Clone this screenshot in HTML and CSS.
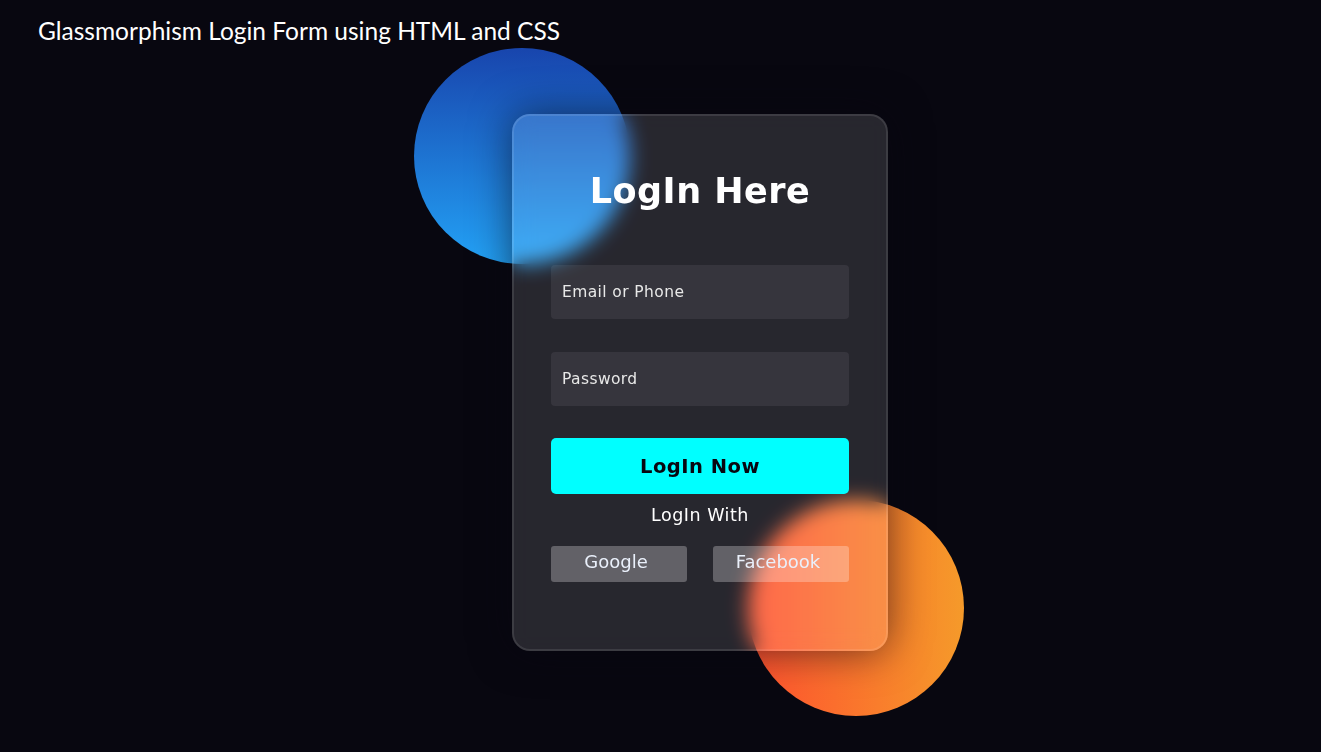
FILE: index.html
```html
<!DOCTYPE html>
<html lang="en">
<head>
<meta charset="utf-8">
<title>Glassmorphism Login Form</title>
<link rel="stylesheet" href="styles.css">
</head>
<body>
<div class="page">
  <p class="caption">Glassmorphism Login Form using HTML and CSS</p>
  <div class="stage">
    <div class="shape shape-blue"></div>
    <div class="shape shape-orange"></div>
    <form class="card">
      <h3 class="card-title">LogIn Here</h3>
      <input class="field field-first" type="text" placeholder="Email or Phone">
      <input class="field field-next" type="password" placeholder="Password">
      <button class="submit" type="button">LogIn Now</button>
      <p class="with">LogIn With</p>
      <div class="social">
        <div class="social-btn">Google</div>
        <div class="social-btn">Facebook</div>
      </div>
    </form>
  </div>
</div>
</body>
</html>
```

FILE: styles.css
```css
* { box-sizing: border-box; }
html, body { margin: 0; padding: 0; }
body {
  background: #080710;
  width: 1321px;
  height: 752px;
  overflow: hidden;
}
.page {
  display: flex;
  flex-direction: column;
}
.caption {
  margin: 0;
  padding: 16px 0 0 38px;
  height: 46px;
  line-height: 30px;
  font-family: "Lato", "Open Sans", sans-serif;
  font-size: 24.5px;
  color: #ffffff;
}
.stage {
  position: relative;
  width: 376px;
  height: 537px;
  margin: 68px 0 0 512px;
}
.shape {
  position: absolute;
  width: 216px;
  height: 216px;
  border-radius: 50%;
}
.shape-blue {
  left: -98px;
  top: -66px;
  background: linear-gradient(#1845ad, #23a2f6);
}
.shape-orange {
  left: 236px;
  top: 386px;
  background: linear-gradient(to right, #ff512f, #f59a2a);
}
.card {
  position: relative;
  display: flex;
  flex-direction: column;
  width: 376px;
  height: 537px;
  margin: 0;
  padding: 50px 37px 0;
  background-color: rgba(255, 255, 255, 0.13);
  border: 2px solid rgba(255, 255, 255, 0.1);
  border-radius: 18px;
  backdrop-filter: blur(10px);
  -webkit-backdrop-filter: blur(10px);
  box-shadow: 0 0 40px rgba(8, 7, 16, 0.6);
  font-family: "DejaVu Sans", Verdana, sans-serif;
  color: #ffffff;
}
.card-title {
  margin: 0;
  height: 50px;
  line-height: 50px;
  font-size: 35px;
  font-weight: 700;
  letter-spacing: 0.5px;
  text-align: center;
}
.field {
  display: block;
  width: 100%;
  height: 54px;
  padding: 0 11px;
  border: none;
  outline: none;
  border-radius: 4px;
  background-color: rgba(255, 255, 255, 0.07);
  font-family: "DejaVu Sans", Verdana, sans-serif;
  font-size: 15.5px;
  letter-spacing: 0.4px;
  color: #ffffff;
}
.field::placeholder { color: #e8e8e8; }
.field-first { margin-top: 49px; }
.field-next { margin-top: 33px; }
.submit {
  margin-top: 32px;
  width: 100%;
  height: 56px;
  border: none;
  border-radius: 5px;
  background-color: #00ffff;
  color: #080710;
  font-family: "DejaVu Sans", Verdana, sans-serif;
  font-size: 19.5px;
  font-weight: 700;
  letter-spacing: 0.5px;
}
.with {
  margin: 11px 0 0;
  height: 20px;
  line-height: 20px;
  text-align: center;
  font-size: 17.5px;
  letter-spacing: 0.5px;
  color: #ffffff;
}
.social {
  margin-top: 21px;
  display: flex;
  justify-content: space-between;
}
.social-btn {
  width: 136px;
  height: 36px;
  line-height: 32px;
  padding-right: 6px;
  border-radius: 3px;
  background-color: rgba(255, 255, 255, 0.27);
  color: #eaf0fb;
  font-size: 18px;
  text-align: center;
}
```
